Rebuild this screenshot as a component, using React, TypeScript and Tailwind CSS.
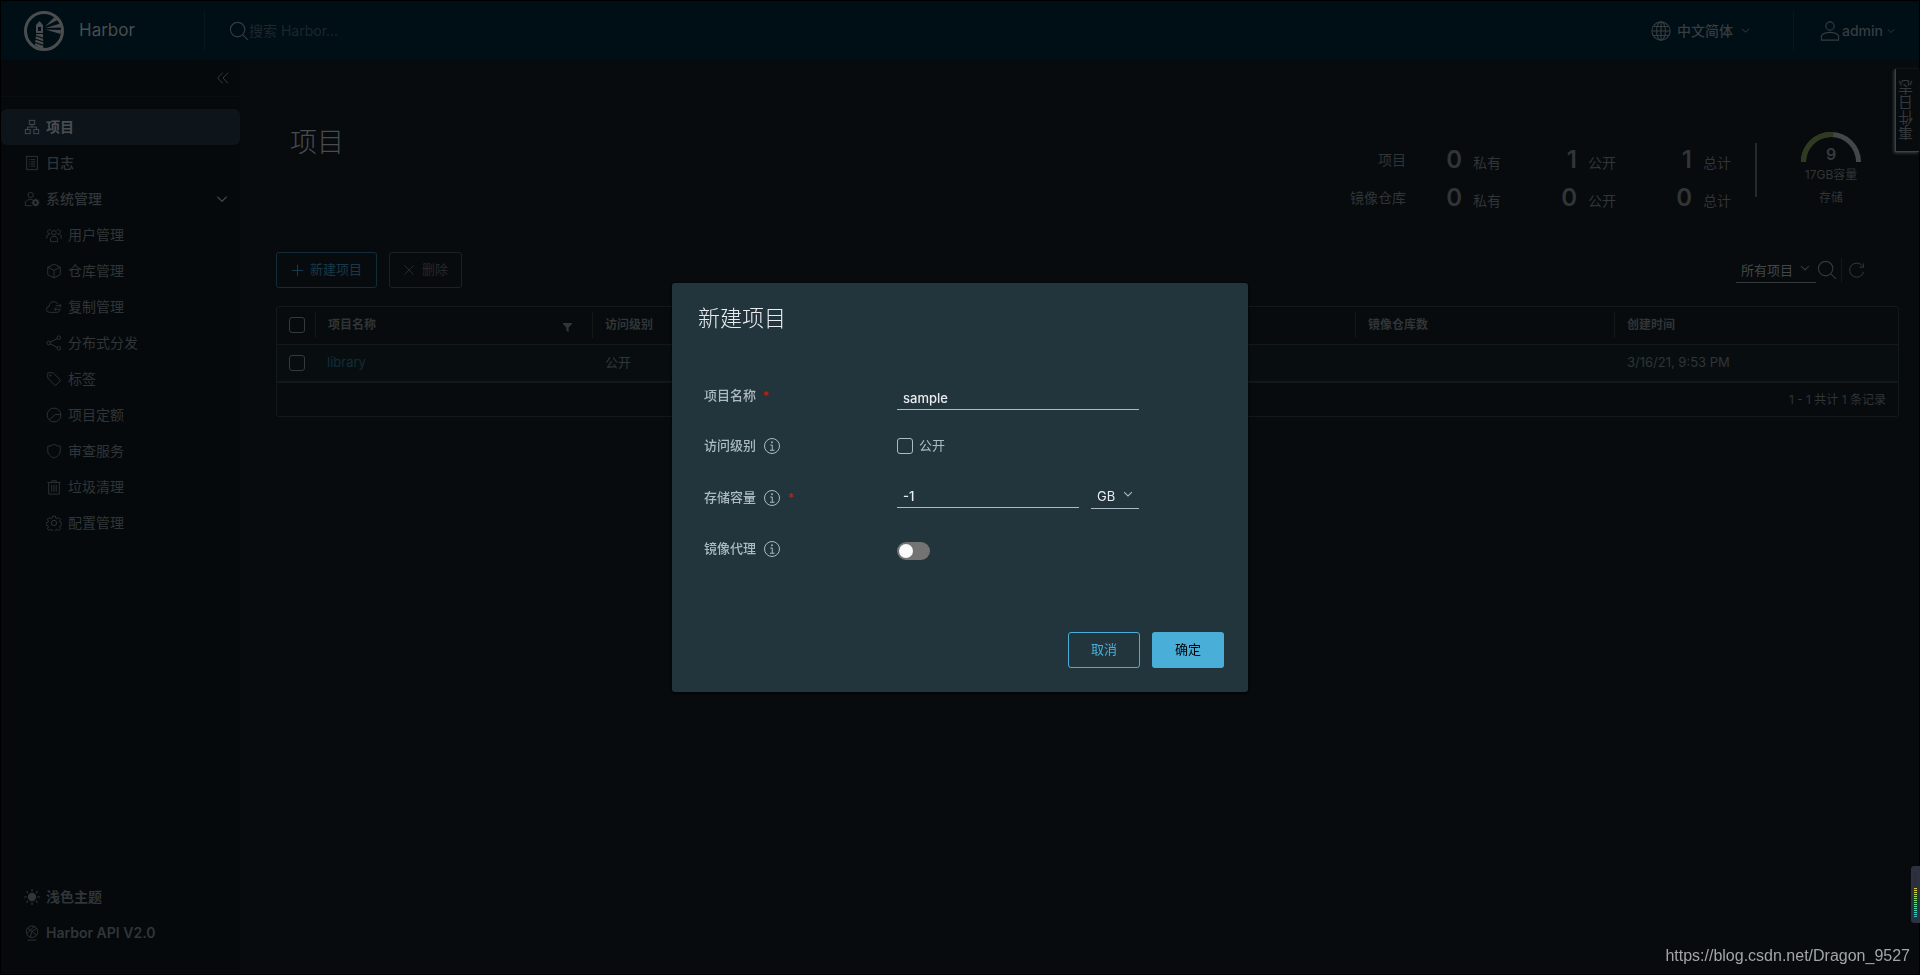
import React from "react";

type IconProps = { className?: string; children: React.ReactNode };

function Icon({ className = "size-4", children }: IconProps) {
  return (
    <svg
      viewBox="0 0 36 36"
      className={`shrink-0 ${className}`}
      fill="none"
      stroke="currentColor"
      strokeWidth="2"
      aria-hidden="true"
    >
      {children}
    </svg>
  );
}

const Chevron = ({ className }: { className?: string }) => (
  <Icon className={className}>
    <path d="M4 11l14 14 14-14" strokeWidth="4" />
  </Icon>
);

const SearchIcon = ({ className }: { className?: string }) => (
  <Icon className={className}>
    <circle cx="15.5" cy="15.5" r="13" />
    <path d="M25 25l9 9" />
  </Icon>
);

const InfoIcon = () => (
  <Icon className="size-[18px]">
    <circle cx="18" cy="18" r="15" />
    <circle cx="18" cy="10.5" r="1.8" fill="currentColor" stroke="none" />
    <path d="M14.5 16H18.500V26M14 26.500h9" />
  </Icon>
);

const OrgIcon = () => (
  <Icon>
    <rect x="12" y="3" width="12" height="9" />
    <rect x="3" y="24" width="11" height="9" />
    <rect x="22" y="24" width="11" height="9" />
    <path d="M18 12v6M8 24v-6h20v6" />
  </Icon>
);

const LogIcon = () => (
  <Icon>
    <rect x="6" y="3" width="24" height="30" />
    <path d="M11 10h2M11 15h2M11 20h2M11 25h2M15 10h10M15 15h10M15 20h10M15 25h10" />
  </Icon>
);

const AdminIcon = () => (
  <Icon>
    <circle cx="15" cy="9" r="6" />
    <path d="M17 33H3v-8c3-4 7-6 12-6l4 .6" />
    <circle cx="26" cy="26" r="5" strokeWidth="4" />
    <path
      d="M26 17v4M26 31v4M17 26h4M31 26h4M19.600 19.600l3 3M29.400 29.400l3 3M19.600 32.400l3-3M29.400 22.600l3-3"
      strokeWidth="3"
    />
  </Icon>
);

const UsersIcon = () => (
  <Icon>
    <circle cx="18" cy="13" r="5" />
    <path d="M10 33v-7c2-4 5-5 8-5s6 1 8 5v7z" />
    <path d="M12 8a4.500 4.500 0 1 0-4 7M2 26v-6c1-3 4-4 8-4M24 8a4.500 4.500 0 1 1 4 7M34 26v-6c-1-3-4-4-8-4" />
  </Icon>
);

const BoxIcon = () => (
  <Icon>
    <path d="M18 2.500l14 7v17l-14 7-14-7v-17zM4 9.500l14 7 14-7M18 16.500v17" />
  </Icon>
);

const CloudIcon = () => (
  <Icon>
    <path d="M31 24v1a6 6 0 0 1-6 5H8a6.500 6.500 0 0 1-1-13c0-7 5-11 10-11 4 0 7 2 9 5" />
    <path d="M22 15h12M30 11l4 4-4 4M33 23H19M23 19l-4 4 4 4" />
  </Icon>
);

const ShareIcon = () => (
  <Icon>
    <circle cx="6" cy="18" r="4" />
    <circle cx="29" cy="6" r="4" />
    <circle cx="29" cy="30" r="4" />
    <path d="M9.500 16l16-8M9.500 20l16 8" />
  </Icon>
);

const TagIcon = () => (
  <Icon>
    <path d="M4 4h12l17 17-12 12L4 16z" strokeLinejoin="round" />
    <circle cx="10" cy="10" r="1.500" />
  </Icon>
);

const QuotaIcon = () => (
  <Icon>
    <circle cx="18" cy="18" r="15.500" />
    <path d="M33 17H21L8 28" />
  </Icon>
);

const ShieldIcon = () => (
  <Icon>
    <path
      d="M18 2.500c4 3 9 4.500 14 4.500v11c0 7-6 12-14 16C10 30 4 25 4 18V7c5 0 10-1.500 14-4.500z"
      strokeLinejoin="round"
    />
  </Icon>
);

const TrashIcon = () => (
  <Icon>
    <path d="M3 8h30M13 8V4h10v4M6 8v26h24V8M13 13v16M18 13v16M23 13v16" />
  </Icon>
);

const GearIcon = () => (
  <Icon>
    <circle cx="18" cy="18" r="6" />
    <path
      d="M15 2.500h6l1 4.500 3 1.200 4-2.400 4 4-2.400 4 1.200 3 4 1v5l-4 1-1.200 3 2.400 4-4 4-4-2.400-3 1.200-1 4h-6l-1-4-3-1.200-4 2.400-4-4 2.400-4-1.200-3-4-1v-5l4-1 1.200-3-2.400-4 4-4 4 2.400 3-1.200z"
      strokeLinejoin="round"
    />
  </Icon>
);

const SunIcon = () => (
  <Icon>
    <circle cx="18" cy="18" r="9.500" fill="currentColor" stroke="none" />
    <path
      d="M18 0v6M18 30v6M0 18h6M30 18h6M5.500 5.500l3.500 3.500M27 27l3.500 3.500M5.500 30.500L9 27M27 9l3.500-3.500"
      strokeWidth="2.500"
    />
  </Icon>
);

const ApiIcon = () => (
  <Icon>
    <circle cx="18" cy="15" r="13" />
    <path d="M8 7l10 7 11-6M18 14l-4 13M18 14l10 9M6 20l11-12 8-5M8 34h20" />
  </Icon>
);

const GlobeIcon = () => (
  <Icon className="size-5">
    <circle cx="18" cy="18" r="16.500" />
    <ellipse cx="18" cy="18" rx="8" ry="16.500" />
    <path d="M18 2v32M2 18h32M5 10h26M5 26h26" />
  </Icon>
);

const UserIcon = () => (
  <Icon className="size-5">
    <circle cx="18" cy="9" r="7.500" />
    <path d="M2.500 34.500v-8c3-4 9-6 15.500-6s12.500 2 15.500 6v8z" strokeLinejoin="round" />
  </Icon>
);

const HarborLogo = () => (
  <svg viewBox="0 0 40 40" className="size-10 shrink-0" aria-hidden="true">
    <circle cx="20" cy="20" r="18.500" fill="none" stroke="#4a4d4f" strokeWidth="3" />
    <g fill="#4a4d4f">
      <path d="M15.500 10l3.500 4v8h-7v-8zM14 16v4h3v-4z" fillRule="evenodd" />
      <path d="M12 23h7l.5 15-5-1.500-3.500-2.500z" />
      <path d="M21 15.500L30.500 6l3 3zM21.500 17l15-4.500.5 4zM21.500 18.500l15.500.5-.5 4z" />
    </g>
    <path d="M11 24.500l9 3M11 28l9 3M11 31.500l9 3" stroke="#000e15" strokeWidth="1.200" />
  </svg>
);

const subItems: { label: string; icon: React.ReactNode }[] = [
  { label: "用户管理", icon: <UsersIcon /> },
  { label: "仓库管理", icon: <BoxIcon /> },
  { label: "复制管理", icon: <CloudIcon /> },
  { label: "分布式分发", icon: <ShareIcon /> },
  { label: "标签", icon: <TagIcon /> },
  { label: "项目定额", icon: <QuotaIcon /> },
  { label: "审查服务", icon: <ShieldIcon /> },
  { label: "垃圾清理", icon: <TrashIcon /> },
  { label: "配置管理", icon: <GearIcon /> },
];

const stats = [
  { label: "项目", values: ["0", "1", "1"] },
  { label: "镜像仓库", values: ["0", "0", "0"] },
];
const statNames = ["私有", "公开", "总计"];

const meterColors = [
  "#262b38", "#262b38", "#262b38", "#262b38", "#262b38", "#262b38", "#262b38", "#262b38",
  "#e3c93a", "#dccf3e", "#c9d345", "#b5d64c", "#a0d957", "#8bdb62", "#78dc70",
  "#68dc80", "#5adb90", "#4dd89e", "#44d4aa", "#3dd0b4", "#38ccbc", "#35c9c2", "#33c6c6",
];

function Header() {
  return (
    <header className="flex h-[59px] items-center bg-[#000e15] text-[#363d40]">
      <a href="#" className="flex w-[203px] items-center gap-[15px] pl-[23px] text-[17px] text-[#484d50]">
        <HarborLogo />
        Harbor
      </a>
      <div className="flex h-10 flex-1 items-center border-l border-[#08171f] pl-6">
        <SearchIcon className="size-5" />
        <input
          aria-label="搜索 Harbor"
          placeholder="搜索 Harbor..."
          className="w-64 bg-transparent text-sm outline-none placeholder:text-[#1c272d]"
        />
      </div>
      <button className="flex h-10 items-center pr-[43px] text-sm font-medium">
        <GlobeIcon />
        <span className="ml-1.5">中文简体</span>
        <Chevron className="ml-2 size-[9px]" />
      </button>
      <button className="flex h-10 items-center border-l border-[#08171f] pr-6 pl-[26px] text-sm font-medium">
        <UserIcon />
        <span className="ml-0.5">admin</span>
        <Chevron className="ml-1 size-2" />
      </button>
    </header>
  );
}

function Sidebar() {
  return (
    <nav className="flex w-[239px] shrink-0 flex-col bg-[#05090b] text-sm text-[#303538]">
      <div className="flex h-9 items-center justify-end pr-[11px] text-[#353a3d]">
        <button aria-label="折叠">
          <Icon className="size-3">
            <path d="M17 2L2 18l15 16M33 2L18 18l15 16" strokeWidth="3" />
          </Icon>
        </button>
      </div>
      <div className="mb-3 border-b border-[#0a0e11]" />
      <a href="#" className="flex h-9 items-center gap-1.5 rounded-md bg-[#0d151b] pl-[23px] font-semibold text-[#4a4e51]">
        <OrgIcon />
        项目
      </a>
      <a href="#" className="flex h-9 items-center gap-1.5 pl-[23px] font-medium">
        <LogIcon />
        日志
      </a>
      <button className="flex h-9 items-center gap-1.5 pr-3 pl-[23px] font-medium">
        <AdminIcon />
        系统管理
        <Chevron className="ml-auto size-3 text-[#3e4245]" />
      </button>
      {subItems.map((item) => (
        <a key={item.label} href="#" className="flex h-9 items-center gap-1.5 pl-[45px]">
          {item.icon}
          {item.label}
        </a>
      ))}
      <div className="mt-auto pb-[23px] font-semibold">
        <button className="flex h-9 items-center gap-1.5 pl-[23px]">
          <SunIcon />
          浅色主题
        </button>
        <a href="#" className="flex h-9 items-center gap-1.5 pl-[23px]">
          <ApiIcon />
          Harbor API V2.0
        </a>
      </div>
    </nav>
  );
}

function Summary() {
  return (
    <div className="flex h-48 items-start pr-[38px] pl-[14px]">
      <h1 className="mt-[65px] text-[27px] leading-9 font-light text-[#484c4e]">项目</h1>
      <div className="mt-[81px] ml-auto text-sm text-[#303537]">
        {stats.map((row) => (
          <div key={row.label} className="flex h-[38px] items-center justify-end">
            <span>{row.label}</span>
            <div className="flex">
              {row.values.map((value, i) => (
                <div key={statNames[i]} className="flex w-[115px] items-baseline justify-end gap-[11px] first:w-[95px]">
                  <span className="text-2xl font-semibold">{value}</span>
                  <span>{statNames[i]}</span>
                </div>
              ))}
            </div>
          </div>
        ))}
      </div>
      <div className="mt-[83px] ml-6 h-[54px] w-0.5 bg-[#25292b]" />
      <div className="mt-[72px] ml-[44px] flex flex-col items-center text-[#303537]">
        <div className="relative">
          <svg viewBox="0 0 60 30" className="h-[30px] w-[60px]" fill="none" strokeWidth="5" aria-hidden="true">
            <path d="M2.500 30a27.500 27.500 0 0 1 55 0" stroke="#444748" />
            <path d="M2.500 30A27.500 27.500 0 0 1 32.500 2.600" stroke="#2f3b20" />
          </svg>
          <span className="absolute inset-x-0 top-3 text-center text-base leading-5 font-semibold text-[#363a3c]">9</span>
        </div>
        <span className="mt-1 text-xs leading-[18px]">17GB容量</span>
        <span className="mt-[5px] text-xs leading-[18px]">存储</span>
      </div>
    </div>
  );
}

function Toolbar() {
  return (
    <div className="flex h-9 items-center pr-[34px]">
      <button className="flex h-9 items-center gap-1.5 rounded-[3px] border border-[#122c39] px-[14px] text-[13px] text-[#17394a]">
        <Icon className="size-[13px]">
          <path d="M18 2v32M2 18h32" strokeWidth="3" />
        </Icon>
        新建项目
      </button>
      <button
        disabled
        className="ml-3 flex h-9 items-center gap-[7px] rounded-[3px] border border-[#1d2123] px-[13px] text-[13px] text-[#25292b]"
      >
        <Icon className="size-3">
          <path d="M4 4l28 28M32 4L4 32" strokeWidth="3" />
        </Icon>
        删除
      </button>
      <div className="ml-auto flex items-center text-[#34393b]">
        <div className="relative">
          <select
            aria-label="项目范围"
            className="h-6 w-20 appearance-none border-b border-[#34393b] bg-transparent pl-[5px] text-[13px] text-[#42474a] outline-none"
          >
            <option>所有项目</option>
          </select>
          <Chevron className="pointer-events-none absolute top-1.5 right-1.5 size-[10px]" />
        </div>
        <button aria-label="搜索" className="pl-px">
          <SearchIcon className="size-5" />
        </button>
        <button aria-label="刷新" className="ml-1 border-l border-[#14181a] py-1 pl-1.5">
          <Icon className="size-[17px]">
            <path d="M31 9A15 15 0 1 0 33 21M33 3v8h-9" />
          </Icon>
        </button>
      </div>
    </div>
  );
}

const bgCheckbox =
  "block size-4 appearance-none rounded-[3px] border border-[#36393b] bg-transparent";

function HeadCell({ children }: { children?: React.ReactNode }) {
  return (
    <th className="p-0 font-semibold">
      <div className="flex h-[26px] items-center justify-between border-l border-[#131719] pr-5 pl-3">
        {children}
      </div>
    </th>
  );
}

function ProjectTable() {
  return (
    <div className="mt-[18px] rounded-[3px] border border-[#13181a] text-[13px] text-[#303537]">
      <table className="w-full table-fixed border-collapse text-left">
        <colgroup>
          <col className="w-[38px]" />
          <col className="w-[277px]" />
          <col className="w-[254px]" />
          <col />
          <col className="w-[259px]" />
          <col className="w-[284px]" />
        </colgroup>
        <thead className="text-xs">
          <tr className="h-[37px] border-b border-[#13181a]">
            <th className="p-0 pl-3">
              <input type="checkbox" aria-label="全选" className={bgCheckbox} />
            </th>
            <HeadCell>
              项目名称
              <button aria-label="筛选" className="pt-1">
                <svg viewBox="0 0 10 10" className="size-[9px] fill-current" aria-hidden="true">
                  <path d="M0 0h10v1L6.300 5v5L3.700 8.500V5L0 1z" />
                </svg>
              </button>
            </HeadCell>
            <HeadCell>访问级别</HeadCell>
            <th />
            <HeadCell>镜像仓库数</HeadCell>
            <HeadCell>创建时间</HeadCell>
          </tr>
        </thead>
        <tbody>
          <tr className="h-[38px] border-b-2 border-[#13181a] bg-[#080e10]">
            <td className="p-0 pl-3">
              <input type="checkbox" aria-label="library" className={bgCheckbox} />
            </td>
            <td className="p-0 pl-3">
              <a href="#" className="text-[#112d3b]">library</a>
            </td>
            <td className="p-0 pl-[13px]">公开</td>
            <td />
            <td />
            <td className="p-0 pl-[13px]">3/16/21, 9:53 PM</td>
          </tr>
        </tbody>
      </table>
      <div className="flex h-[33px] items-center justify-end pr-3 text-xs">1 - 1 共计 1 条记录</div>
    </div>
  );
}

function Required() {
  return <span className="text-xs leading-4 font-semibold text-[#b32a15]">*</span>;
}

function Dialog() {
  const label = "flex w-48 items-center gap-[7px] text-[13px] font-medium text-[#acbac3]";
  return (
    <div className="fixed inset-0 flex items-center justify-center">
      <section
        role="dialog"
        aria-labelledby="dialog-title"
        className="w-[576px] rounded-[3px] bg-[#22343c] px-6 pt-[18px] pb-6 shadow-[0_1px_3px_#000]"
      >
        <h2 id="dialog-title" className="pl-[2px] text-[22px] leading-[34px] font-light text-[#e9ecef]">
          新建项目
        </h2>
        <form className="mt-[38px] pl-2">
          <div className="flex h-[50px] items-center">
            <label htmlFor="name" className={`${label} pb-1`}>
              项目名称 <Required />
            </label>
            <input
              id="name"
              defaultValue="sample"
              className="ml-px h-6 w-[242px] border-b border-[#acbac3] bg-transparent px-1.5 text-[13px] font-medium text-[#e9ecef] outline-none"
            />
          </div>
          <div className="flex h-[46px] items-center">
            <label htmlFor="public" className={label}>
              访问级别 <InfoIcon />
            </label>
            <input
              id="public"
              type="checkbox"
              className="ml-px size-4 appearance-none rounded-[3px] border border-[#acbac3] bg-transparent"
            />
            <label htmlFor="public" className="pl-1.5 text-[13px] text-[#acbac3]">
              公开
            </label>
          </div>
          <div className="flex h-[54px] items-center">
            <label htmlFor="quota" className={`${label} pt-1`}>
              存储容量 <InfoIcon /> <Required />
            </label>
            <input
              id="quota"
              defaultValue="-1"
              className="ml-px h-6 w-[182px] border-b border-[#acbac3] bg-transparent px-1.5 text-[13px] font-medium text-[#e9ecef] outline-none"
            />
            <div className="relative ml-3">
              <select
                aria-label="单位"
                className="h-6 w-12 appearance-none border-b border-[#acbac3] bg-transparent pl-1.5 text-[13px] text-[#e9ecef] outline-none"
              >
                <option>GB</option>
              </select>
              <Chevron className="pointer-events-none absolute top-1.5 right-1.5 size-[10px] text-[#acbac3]" />
            </div>
          </div>
          <div className="flex h-14 items-center">
            <label htmlFor="proxy" className={`${label} pb-1`}>
              镜像代理 <InfoIcon />
            </label>
            <input
              id="proxy"
              type="checkbox"
              role="switch"
              className="ml-px flex h-[18px] w-[33px] appearance-none items-center rounded-full bg-[#737373] pl-0.5 before:size-[14px] before:rounded-full before:bg-[#fafafa] before:content-['']"
            />
          </div>
        </form>
        <div className="mt-[53px] flex justify-end gap-3 text-[13px]">
          <button className="h-9 w-[72px] rounded-[3px] border border-[#49afd9] text-[#49afd9]">取消</button>
          <button className="h-9 w-[72px] rounded-[3px] bg-[#49afd9] text-black">确定</button>
        </div>
      </section>
    </div>
  );
}

export default function App() {
  return (
    <div className="relative flex min-h-screen flex-col border border-black bg-[#070b0e] font-[Inter,'Noto_Sans_CJK_SC',sans-serif]">
      <Header />
      <div className="flex flex-1">
        <Sidebar />
        <main className="min-w-0 flex-1 pr-5 pl-9">
          <Summary />
          <Toolbar />
          <ProjectTable />
        </main>
      </div>
      <button className="absolute top-[68px] right-0 flex h-[83px] w-6 items-center justify-center border-b border-l border-[#3f4244] bg-[#070b0e] text-[15px] text-[#34393b] shadow-[-1px_1px_3px_#3f4244]">
        <span className="rotate-180 [writing-mode:vertical-rl]">事件日志</span>
      </button>
      <Dialog />
      <div className="fixed right-0 bottom-[52px] flex h-[57px] w-[9px] flex-col gap-px rounded-l-[3px] bg-[#2c3040] px-[3px] pt-1.5">
        {meterColors.map((color, i) => (
          <span key={i} className="h-px shrink-0" style={{ backgroundColor: color }} />
        ))}
      </div>
      <a
        href="https://blog.csdn.net/Dragon_9527"
        className="fixed right-[10px] bottom-[7px] font-['Liberation_Sans',Arial,sans-serif] text-base leading-6 text-[#a3a5a6]"
      >
        https://blog.csdn.net/Dragon_9527
      </a>
    </div>
  );
}
